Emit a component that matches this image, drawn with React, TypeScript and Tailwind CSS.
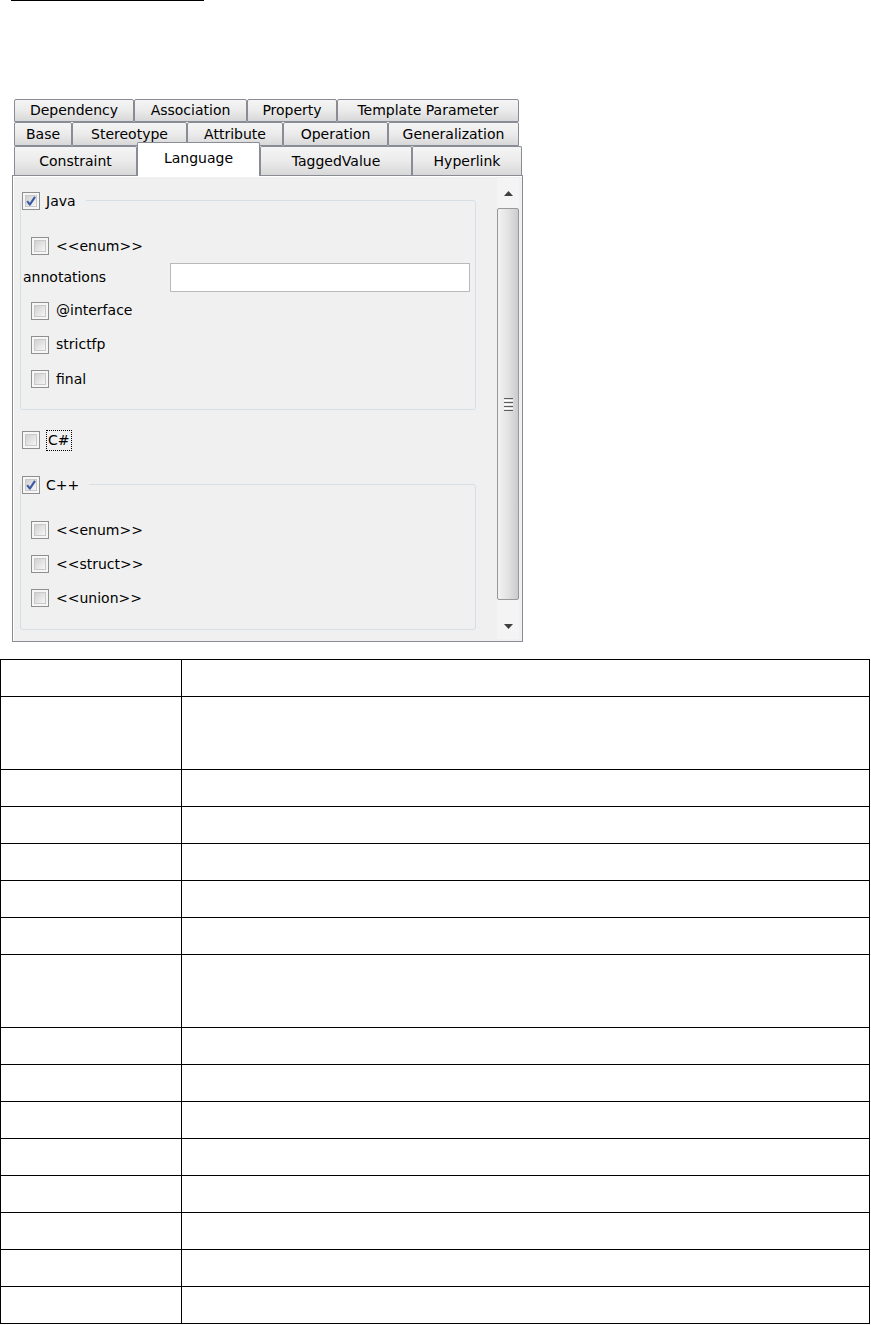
import React from "react";

function Check({ checked = false }: { checked?: boolean }) {
  return (
    <div className="w-[18px] h-[18px] shrink-0 border border-[#8e8f8f] bg-[#f6f6f6] p-[2px]">
      <div className="relative w-full h-full border border-[#c9c9c9] bg-linear-to-br from-[#d0d0d0] to-[#f6f6f6]">
        {checked && (
          <svg className="absolute -left-px -top-px" width="12" height="12" viewBox="0 0 12 12">
            <path d="M2.2 6.2 L4.8 9.6 L10 1.8" stroke="#3b59a3" strokeWidth="2.1" fill="none" strokeLinejoin="round" />
          </svg>
        )}
      </div>
    </div>
  );
}

function Tab({ label, cls }: { label: string; cls: string }) {
  return (
    <div
      className={`${cls} h-full flex items-center justify-center border border-[#898c95] rounded-t-[2px] bg-linear-to-b from-[#f5f5f5] via-[#ebebeb] to-[#d8d8d8] text-black whitespace-nowrap`}
    >
      {label}
    </div>
  );
}

function Tab3({ label, cls }: { label: string; cls: string }) {
  return (
    <div
      className={`${cls} h-full flex items-center justify-center border border-b-0 border-[#898c95] rounded-t-[2px] bg-linear-to-b from-[#f5f5f5] via-[#ebebeb] to-[#d8d8d8] text-black whitespace-nowrap`}
    >
      {label}
    </div>
  );
}

function Group({ label, children, cls }: { label: string; children: React.ReactNode; cls: string }) {
  return (
    <div className={`relative w-[456px] border border-[#d5dfe5] rounded-[3px] ${cls}`}>
      <div className="absolute left-px -top-[9px] flex items-center gap-[6px] bg-[#f0f0f0] pr-[10px]">
        <Check checked />
        <span className="leading-none">{label}</span>
      </div>
      {children}
    </div>
  );
}

function CheckRow({ label, h }: { label: string; h: string }) {
  return (
    <div className={`${h} flex items-center gap-[7px] pl-[10px]`}>
      <Check />
      <span>{label}</span>
    </div>
  );
}

const rowHeights = [37, 73, 37, 37, 37, 37, 37, 73, 37, 37, 37, 37, 37, 37, 37, 37];

export default function App() {
  return (
    <div className="bg-white font-['DejaVu_Sans',sans-serif] text-[14px] text-black">
      <div className="ml-[11px] w-[193px] h-px bg-black" />

      {/* tab rows */}
      <div className="ml-[14px] mt-[98px]">
        <div className="flex h-[23px] w-[505px]">
          <Tab label="Dependency" cls="w-[120px]" />
          <Tab label="Association" cls="w-[113px]" />
          <Tab label="Property" cls="w-[90px]" />
          <Tab label="Template Parameter" cls="w-[182px]" />
        </div>
        <div className="flex h-[24px] w-[505px]">
          <Tab label="Base" cls="w-[58px]" />
          <Tab label="Stereotype" cls="w-[115px]" />
          <Tab label="Attribute" cls="w-[96px]" />
          <Tab label="Operation" cls="w-[105px]" />
          <Tab label="Generalization" cls="w-[131px]" />
        </div>
        <div className="flex h-[29px] w-[508px] items-end">
          <Tab3 label="Constraint" cls="w-[123px]" />
          <div className="relative top-px z-10 w-[123px] h-[34px] shrink-0 flex items-center justify-center border border-b-0 border-[#898c95] rounded-t-[2px] bg-white pb-[2px]">
            Language
          </div>
          <Tab3 label="TaggedValue" cls="w-[152px]" />
          <Tab3 label="Hyperlink" cls="w-[110px]" />
        </div>
      </div>

      {/* panel */}
      <div className="ml-[12px] w-[511px] h-[467px] border border-[#898c95] bg-[#f0f0f0] shadow-[inset_1px_1px_0_#ffffff] flex">
        <div className="flex-1 pl-[7px] pt-[24px]">
          <Group label="Java" cls="">
            <div className="pt-[30px] pb-[13px]">
              <CheckRow label="<<enum>>" h="h-[30px]" />
              <div className="h-[33px] flex items-center pl-[2px]">
                <span className="w-[147px]">annotations</span>
                <div className="w-[300px] h-[29px] border border-[#b9b9b9] bg-white" />
              </div>
              <CheckRow label="@interface" h="h-[33px]" />
              <CheckRow label="strictfp" h="h-[35px]" />
              <CheckRow label="final" h="h-[34px]" />
            </div>
          </Group>

          <div className="mt-[21px] h-[18px] flex items-center gap-[6px] pl-[2px]">
            <Check />
            <span className="h-[21px] flex items-center border border-dotted border-black px-px leading-none">C#</span>
          </div>

          <Group label="C++" cls="mt-[35px]">
            <div className="pt-[28px] pb-[14px]">
              <CheckRow label="<<enum>>" h="h-[34px]" />
              <CheckRow label="<<struct>>" h="h-[34px]" />
              <CheckRow label="<<union>>" h="h-[34px]" />
            </div>
          </Group>
        </div>

        {/* scrollbar */}
        <div className="w-[22px] my-[2px] mr-[3px] flex flex-col bg-[#f4f4f4]">
          <div className="h-[30px] flex items-center justify-center">
            <svg width="9" height="5" viewBox="0 0 9 5">
              <path d="M0 5 L4.5 0 L9 5 Z" fill="#3f3f3f" />
            </svg>
          </div>
          <div className="h-[392px] rounded-[2px] border border-[#989898] bg-linear-to-r from-[#f2f2f2] via-[#e3e3e3] to-[#cbcbcb] flex flex-col items-center justify-center gap-px">
            <div className="w-[9px] h-px bg-[#5e5e5e]" />
            <div className="w-[9px] h-px bg-[#ffffff]" />
            <div className="w-[9px] h-px bg-[#5e5e5e]" />
            <div className="w-[9px] h-px bg-[#ffffff]" />
            <div className="w-[9px] h-px bg-[#5e5e5e]" />
            <div className="w-[9px] h-px bg-[#ffffff]" />
            <div className="w-[9px] h-px bg-[#5e5e5e]" />
          </div>
          <div className="flex-1" />
          <div className="h-[26px] flex items-center justify-center">
            <svg width="9" height="5" viewBox="0 0 9 5">
              <path d="M0 0 L9 0 L4.5 5 Z" fill="#3f3f3f" />
            </svg>
          </div>
        </div>
      </div>

      {/* table */}
      <div className="mt-[17px] w-[870px] border-t border-l border-r border-black">
        {rowHeights.map((h, i) => (
          <div key={i} className={`${h === 73 ? "h-[73px]" : "h-[37px]"} flex border-b border-black`}>
            <div className="w-[181px] border-r border-black" />
            <div className="flex-1" />
          </div>
        ))}
      </div>
    </div>
  );
}
